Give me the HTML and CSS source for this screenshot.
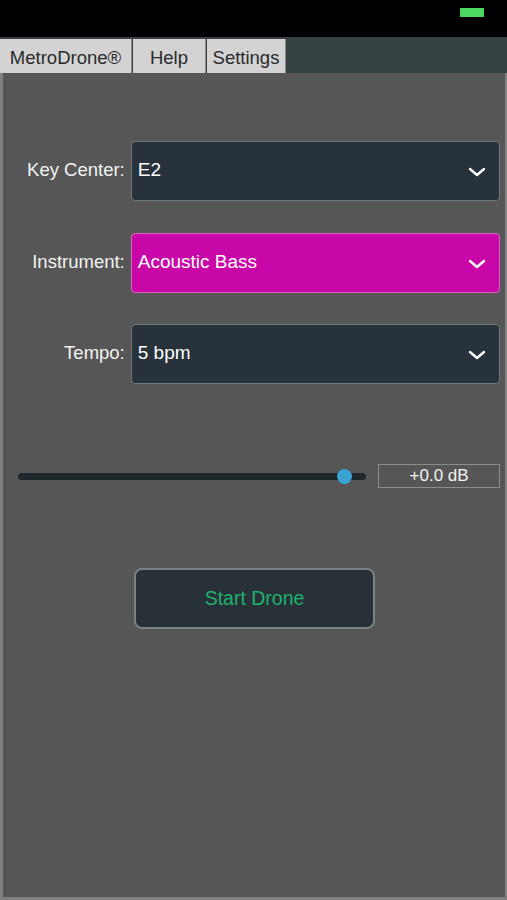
FILE: index.html
```html
<!DOCTYPE html>
<html lang="en">
<head>
    <meta charset="UTF-8">
    <meta name="viewport" content="width=device-width, initial-scale=1.0">
    <title>MetroDrone</title>
    <link rel="stylesheet" href="styles.css">
</head>
<body>
    <div class="statusbar">
        <div class="battery"></div>
    </div>
    <nav class="tabs">
        <div class="tab tab-main">MetroDrone®</div>
        <div class="tab tab-help">Help</div>
        <div class="tab tab-settings">Settings</div>
    </nav>
    <main class="panel">
        <div class="row">
            <div class="label">Key Center:</div>
            <div class="select">
                <span>E2</span>
                <svg class="chev" width="18" height="10" viewBox="0 0 18 10"><path d="M2 2 L9 8 L16 2" fill="none" stroke="#fff" stroke-width="2.4" stroke-linecap="round" stroke-linejoin="round"/></svg>
            </div>
        </div>
        <div class="row">
            <div class="label">Instrument:</div>
            <div class="select pink">
                <span>Acoustic Bass</span>
                <svg class="chev" width="18" height="10" viewBox="0 0 18 10"><path d="M2 2 L9 8 L16 2" fill="none" stroke="#fff" stroke-width="2.4" stroke-linecap="round" stroke-linejoin="round"/></svg>
            </div>
        </div>
        <div class="row">
            <div class="label">Tempo:</div>
            <div class="select">
                <span>5 bpm</span>
                <svg class="chev" width="18" height="10" viewBox="0 0 18 10"><path d="M2 2 L9 8 L16 2" fill="none" stroke="#fff" stroke-width="2.4" stroke-linecap="round" stroke-linejoin="round"/></svg>
            </div>
        </div>
        <div class="volume">
            <div class="track">
                <div class="thumb"></div>
            </div>
            <div class="db">+0.0 dB</div>
        </div>
        <div class="start">
            <button class="start-btn">Start Drone</button>
        </div>
    </main>
</body>
</html>
```

FILE: styles.css
```css
*{
    margin: 0;
    padding: 0;
    box-sizing: border-box;
}
body{
    background-color: #000;
    font-family: "Liberation Sans", Arial, sans-serif;
    width: 507px;
    height: 900px;
    overflow: hidden;
}
.statusbar{
    height: 37px;
    background-color: #000;
    display: flex;
    justify-content: flex-end;
    padding: 8px 23px 0 0;
}
.battery{
    width: 24px;
    height: 9px;
    background-color: #4cd964;
    border-radius: 1px;
}
.tabs{
    display: flex;
    height: 36px;
    background-color: #354143;
    padding-top: 2px;
}
.tab{
    background-color: #d3d3d3;
    color: #2a2a2a;
    font-size: 18.5px;
    display: flex;
    align-items: center;
    justify-content: center;
    margin-right: 1px;
    border-right: 1px solid #8c8c8c;
    padding-top: 4px;
}
.tab-main{
    width: 132px;
}
.tab-help{
    width: 73px;
}
.tab-settings{
    width: 79px;
}
.panel{
    height: 827px;
    background-color: #565656;
    border: 3px solid #7d7f80;
    border-top: none;
    border-right-width: 2px;
    padding: 68px 5px 0 15px;
}
.row{
    display: flex;
    align-items: flex-start;
    margin-bottom: 31.5px;
}
.label{
    width: 113px;
    text-align: right;
    color: #f2f2f2;
    font-size: 18.5px;
    padding: 18px 6px 0 0;
}
.select{
    width: 370px;
    height: 60px;
    background-color: #27323a;
    border: 1px solid #6e787c;
    border-radius: 4px;
    display: flex;
    justify-content: space-between;
    align-items: flex-start;
    color: #fff;
    font-size: 19px;
    padding: 17px 13px 0 6px;
}
.select .chev{
    margin-top: 8px;
}
.pink{
    background-color: #c907a8;
    border-color: #d666c0;
}
.volume{
    display: flex;
    align-items: center;
    margin-top: 80px;
}
.track{
    position: relative;
    width: 349px;
    height: 7px;
    background-color: #1e2629;
    border-radius: 4px;
}
.thumb{
    position: absolute;
    left: 319px;
    top: -4px;
    width: 15px;
    height: 15px;
    border-radius: 50%;
    background-color: #3aa3d4;
}
.db{
    margin-left: 12px;
    width: 122px;
    height: 24px;
    border: 1px solid #8d8d8d;
    color: #f2f2f2;
    font-size: 17px;
    text-align: center;
    line-height: 22px;
}
.start{
    display: flex;
    padding-left: 116px;
    margin-top: 80px;
}
.start-btn{
    width: 241px;
    height: 61px;
    background-color: #283137;
    border: 2px solid #7b8284;
    border-radius: 8px;
    color: #1fb16e;
    font-family: "Liberation Sans", Arial, sans-serif;
    font-size: 19.5px;
}
```
